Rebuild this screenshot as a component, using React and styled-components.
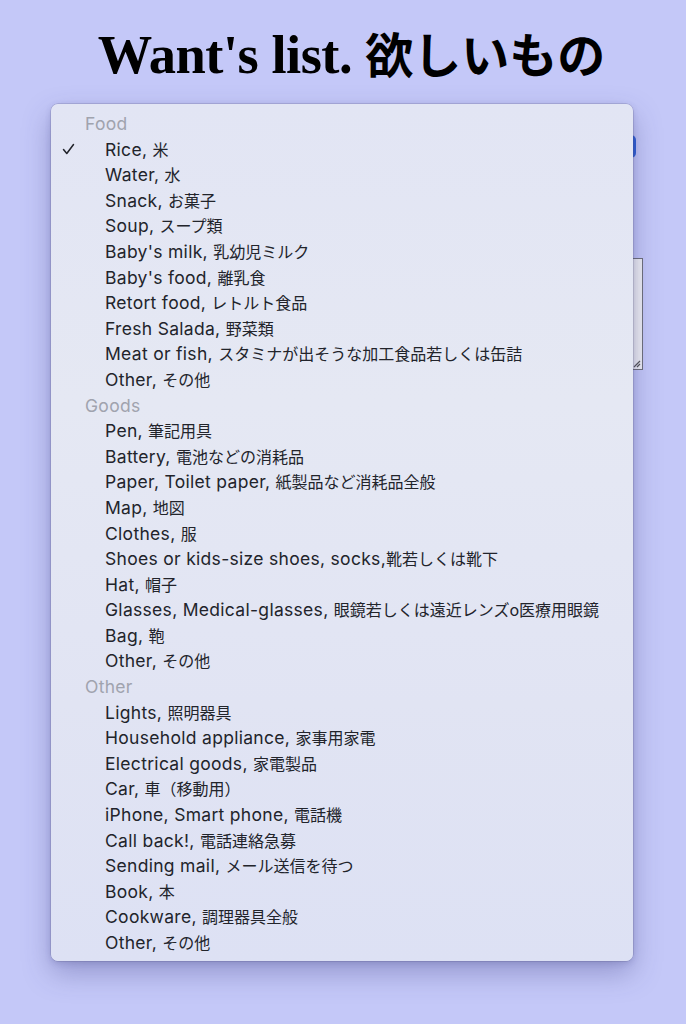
import React from "react";
import styled, { createGlobalStyle } from "styled-components";

const Global = createGlobalStyle`
  html, body { margin: 0; padding: 0; }
  body {
    background: #c4c8f8;
    min-height: 1024px;
    font-family: "Liberation Serif", "Noto Sans CJK JP", serif;
  }
`;

const Page = styled.div`
  position: relative;
  width: 686px;
  height: 1024px;
  overflow: hidden;
`;

const Title = styled.h1`
  margin: 0;
  padding: 28px 0 0 17px;
  height: 60px;
  text-align: center;
  font-weight: 700;
  line-height: 60px;
  color: #000;
  white-space: nowrap;
`;

const TitleLatin = styled.span`
  font-family: "Liberation Serif", serif;
  font-size: 54.5px;
  letter-spacing: -0.5px;
  line-height: 1;
`;

const TitleJa = styled.span`
  font-family: "Noto Sans CJK JP", sans-serif;
  font-size: 48px;
  font-weight: 700;
  line-height: 1;
`;

const Form = styled.form`
  display: flex;
  flex-direction: column;
  align-items: flex-end;
  padding: 0 43px 0 50px;
`;

const SelectBox = styled.div`
  margin-top: 47px;
  margin-right: 7px;
  width: 570px;
  height: 23px;
  border-radius: 5px;
  background: #2d5fd6;
`;

const TextArea = styled.div`
  margin-top: 100px;
  width: 590px;
  height: 110px;
  border: 1px solid #6e6f78;
  background: #efeff3;
  position: relative;
`;

const Grip = styled.svg`
  position: absolute;
  right: 1px;
  bottom: 1px;
`;

const Menu = styled.div`
  position: absolute;
  left: 51px;
  top: 104px;
  width: 582px;
  height: 857px;
  box-sizing: border-box;
  padding: 7px 0 5px;
  border-radius: 7px;
  background: linear-gradient(180deg, #e2e5f4 0%, #e5e8f3 35%, #e1e4f3 70%, #dde1f4 100%);
  box-shadow: 0 0 0 0.5px rgba(70, 70, 110, 0.35), 0 12px 28px rgba(60, 60, 130, 0.35),
    0 2px 6px rgba(60, 60, 130, 0.2);
`;

const Row = styled.div`
  position: relative;
  height: 25.6px;
  line-height: 25.6px;
  padding-left: ${(p) => (p.$header ? "34px" : "54px")};
  color: ${(p) => (p.$header ? "#a0a3ae" : "#22242b")};
  white-space: pre;
`;

const En = styled.span`
  font-family: Inter, "Noto Sans CJK JP", sans-serif;
  font-size: 17.5px;
  letter-spacing: 0.3px;
  vertical-align: top;
`;

const Ja = styled.span`
  font-family: "Noto Sans CJK JP", sans-serif;
  font-size: 16px;
  vertical-align: top;
`;

const Check = styled.svg`
  position: absolute;
  left: 11px;
  top: 6px;
`;

const groups = [
  {
    label: "Food",
    items: [
      ["Rice, ", "米"],
      ["Water, ", "水"],
      ["Snack, ", "お菓子"],
      ["Soup, ", "スープ類"],
      ["Baby's milk, ", "乳幼児ミルク"],
      ["Baby's food, ", "離乳食"],
      ["Retort food, ", "レトルト食品"],
      ["Fresh Salada, ", "野菜類"],
      ["Meat or fish, ", "スタミナが出そうな加工食品若しくは缶詰"],
      ["Other, ", "その他"],
    ],
  },
  {
    label: "Goods",
    items: [
      ["Pen, ", "筆記用具"],
      ["Battery, ", "電池などの消耗品"],
      ["Paper, Toilet paper, ", "紙製品など消耗品全般"],
      ["Map, ", "地図"],
      ["Clothes, ", "服"],
      ["Shoes or kids-size shoes, socks,", "靴若しくは靴下"],
      ["Hat, ", "帽子"],
      ["Glasses, Medical-glasses, ", "眼鏡若しくは遠近レンズo医療用眼鏡"],
      ["Bag, ", "鞄"],
      ["Other, ", "その他"],
    ],
  },
  {
    label: "Other",
    items: [
      ["Lights, ", "照明器具"],
      ["Household appliance, ", "家事用家電"],
      ["Electrical goods, ", "家電製品"],
      ["Car, ", "車（移動用）"],
      ["iPhone, Smart phone, ", "電話機"],
      ["Call back!, ", "電話連絡急募"],
      ["Sending mail, ", "メール送信を待つ"],
      ["Book, ", "本"],
      ["Cookware, ", "調理器具全般"],
      ["Other, ", "その他"],
    ],
  },
];

export default function App() {
  return (
    <Page>
      <Global />
      <Title>
        <TitleLatin>Want's list. </TitleLatin>
        <TitleJa>欲しいもの</TitleJa>
      </Title>
      <Form>
        <SelectBox />
        <TextArea>
          <Grip width="10" height="10" viewBox="0 0 10 10">
            <path d="M9 3 L3 9 M9 6 L6 9" stroke="#555" strokeWidth="1.2" />
          </Grip>
        </TextArea>
      </Form>
      <Menu>
        {groups.map((g) => (
          <React.Fragment key={g.label}>
            <Row $header>
              <En>{g.label}</En>
            </Row>
            {g.items.map(([en, ja], i) => (
              <Row key={g.label + i}>
                {g.label === "Food" && i === 0 && (
                  <Check width="13" height="12" viewBox="0 0 13 12">
                    <path
                      d="M1.5 6.5 L4.8 10.5 L11.5 1.5"
                      fill="none"
                      stroke="#22242b"
                      strokeWidth="1.5"
                      strokeLinecap="round"
                      strokeLinejoin="round"
                    />
                  </Check>
                )}
                <En>{en}</En>
                <Ja>{ja}</Ja>
              </Row>
            ))}
          </React.Fragment>
        ))}
      </Menu>
    </Page>
  );
}
